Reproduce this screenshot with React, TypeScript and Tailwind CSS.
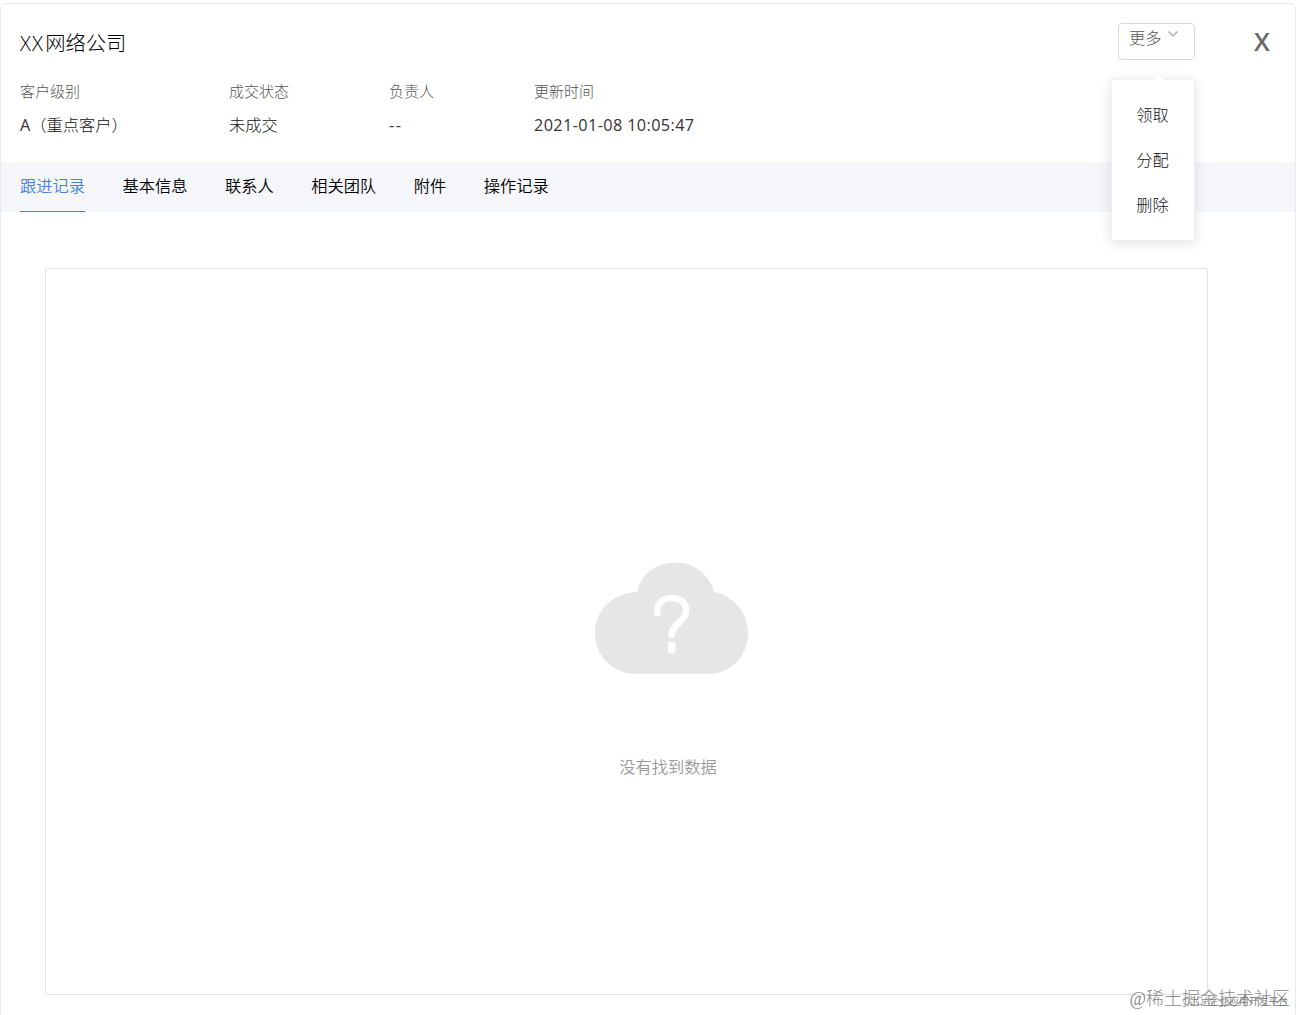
const baseFont = "font-['Open_Sans','Noto_Sans_CJK_SC',sans-serif]";

const fields = [
  { label: '客户级别', lead: 'A', value: '（重点客户）', width: 'w-[209px]', spacing: '' },
  { label: '成交状态', lead: '', value: '未成交', width: 'w-[160px]', spacing: '' },
  { label: '负责人', lead: '--', value: '', width: 'w-[145px]', spacing: 'tracking-[1.6px]' },
  { label: '更新时间', lead: '2021-01-08 10:05:47', value: '', width: 'w-[200px]', spacing: 'tracking-[0.38px]' },
];

const tabs = ['跟进记录', '基本信息', '联系人', '相关团队', '附件', '操作记录'];
const actions = ['领取', '分配', '删除'];

function MoreMenu() {
  return (
    <div className="absolute top-[55px] -left-2 z-10 flex h-[162px] w-[84px] flex-col border border-[#f0f0f0] bg-white pt-[13px] shadow-[0_2px_12px_rgba(0,0,0,0.12)]">
      <svg className="absolute -top-[5px] left-[39px]" width="14" height="6" viewBox="0 0 14 6">
        <path d="M0 6 L7 0 L14 6Z" fill="#fff" />
      </svg>
      {actions.map((a) => (
        <button key={a} className="h-[45px] w-full pr-px text-[16.25px] leading-[45px] font-light text-[#111]">
          {a}
        </button>
      ))}
    </div>
  );
}

function EmptyCloud() {
  return (
    <svg width="154" height="112" viewBox="0 0 154 112">
      <path
        d="M41 112 C18 112 0 94 0 71 C0 48 18 31 42 30 C46 12 62 0.500 81 0.500 C99 0.500 114 12 119 30 C139 34 153 51 153 71 C153 94 136 112 113 112Z"
        fill="#e6e6e6"
      />
      <path
        d="M62.500 51 C61.500 41 68 36 77 36 C86 36 91.500 41 91 49 C90.500 60 76.500 62 76.500 73"
        fill="none"
        stroke="#fff"
        strokeWidth="6.500"
        strokeLinecap="round"
      />
      <rect x="73" y="79.500" width="7.500" height="11.500" rx="3" fill="#fff" />
    </svg>
  );
}

export default function App() {
  return (
    <div className={`${baseFont} relative h-[1015px] w-[1296px] overflow-hidden bg-white pt-[3px] font-[350]`}>
      <div className="h-[1020px] rounded-t-[5px] border border-[#ebebeb]">
        <header className="h-[158px]">
          <div className="flex h-[76px] justify-between pt-[19px] pr-[24px] pl-[19px]">
            <h1 className="pt-[5px] text-[20.3px] leading-[30px] font-light text-black">
              <span className="mr-px tracking-[1.2px]">XX</span>网络公司
            </h1>
            <div className="flex">
              <div className="relative mr-[58px] h-[37px] w-[77px] rounded-[4px] border border-[#d9d9d9] pl-[10px]">
                <div className="flex text-[16.25px] leading-[29px] font-light text-[#555]">
                  更多
                  <svg className="mt-[6px] ml-[5px]" width="12" height="8" viewBox="0 0 12 8">
                    <path d="M1.500 1.500 L6 6 L10.500 1.500" fill="none" stroke="#b0b0b0" strokeWidth="1.500" />
                  </svg>
                </div>
                <MoreMenu />
              </div>
              <button className="h-[36px] w-[18px] text-center text-[25.5px] leading-[36px] font-semibold text-[#6a6a6a]">
                X
              </button>
            </div>
          </div>
          <div className="flex pl-[19px]">
            {fields.map((f) => (
              <div key={f.label} className={f.width}>
                <div className="h-[22px] text-[15px] leading-[22px] font-light text-[#555]">{f.label}</div>
                <div className="mt-[11px] h-6 text-[16.25px] leading-6 font-light whitespace-nowrap text-[#111]">
                  {f.lead && <span className={`font-normal text-[#333] ${f.spacing}`}>{f.lead}</span>}
                  {f.value}
                </div>
              </div>
            ))}
          </div>
        </header>
        <nav className="flex h-[50px] gap-[37.5px] bg-[#f4f6fa] pl-[19px]">
          {tabs.map((t, i) => (
            <button
              key={t}
              className={
                i === 0
                  ? 'flex h-[50px] flex-col text-[16.25px] leading-[49px] text-[#4a80dc]'
                  : 'flex h-[50px] flex-col text-[16.25px] leading-[49px] text-black'
              }
            >
              <span className="h-[49px]">{t}</span>
              {i === 0 && <span className="h-px w-full bg-[#3a88c8]" />}
            </button>
          ))}
        </nav>
        <main className="mt-[56px] ml-[44px] flex h-[727px] w-[1163px] flex-col items-center rounded-[2px] border border-[#e4e4e4] pt-[293px]">
          <div className="ml-[90px]">
            <EmptyCloud />
          </div>
          <p className="mt-[81px] ml-[83px] text-[16.25px] leading-6 text-[#999]">没有找到数据</p>
        </main>
      </div>
      <div className="absolute right-[6px] bottom-[4px] font-['Liberation_Serif','Noto_Sans_CJK_SC',serif] text-[18px] leading-6 font-light whitespace-nowrap text-[#8a8a8a]">
        @稀土掘金技术社区
      </div>
      <div className="absolute right-[8px] bottom-[6px] text-[10px] leading-4 tracking-[-0.15px] whitespace-nowrap text-[#777]">
        O2OA企业应用开发平台
      </div>
    </div>
  );
}
